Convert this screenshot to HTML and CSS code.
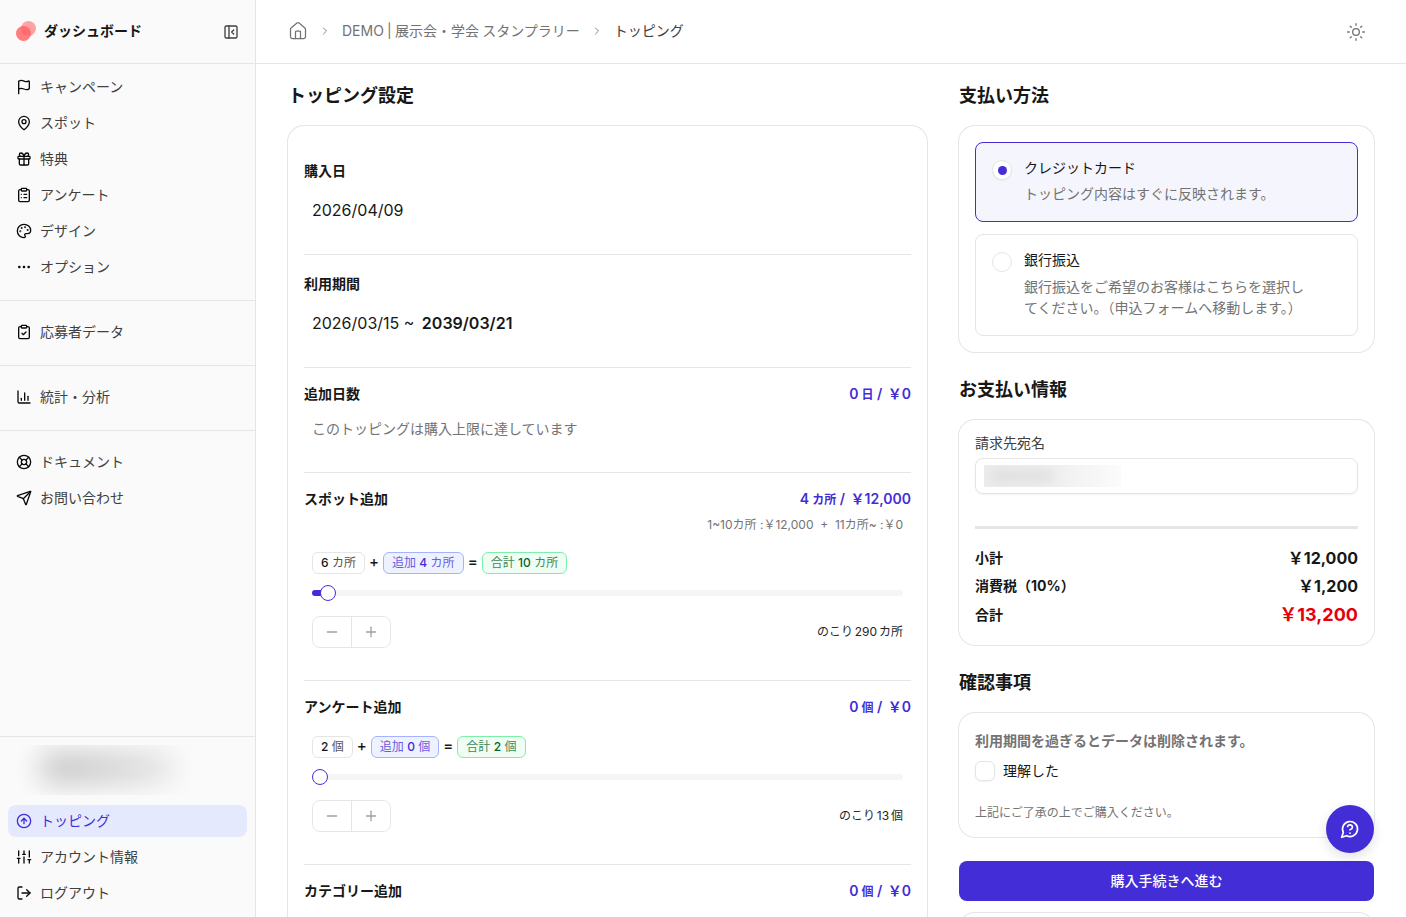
FILE: index.html
```html
<!DOCTYPE html>
<html lang="ja">
<head>
<meta charset="utf-8">
<title>トッピング</title>
<link rel="stylesheet" href="styles.css">
</head>
<body>
<div class="app">
  <aside class="sidebar">
    <div class="brand">
      <svg class="logo" viewBox="0 0 20 20" width="20" height="20"><circle cx="12.5" cy="7.5" r="7.5" fill="#ffa2a2"/><circle cx="7.5" cy="12.5" r="7.5" fill="#ff6467" opacity=".85"/></svg>
      <span class="brand-name">ダッシュボード</span>
      <svg class="ico collapse" viewBox="0 0 24 24"><rect x="3" y="3" width="18" height="18" rx="2"/><path d="M9 3v18"/><path d="m16 15-3-3 3-3"/></svg>
    </div>
    <nav class="group">
      <a class="item"><svg class="ico" viewBox="0 0 24 24"><path d="M4 22V4a1 1 0 0 1 .4-.8A6 6 0 0 1 8 2c3 0 5 2 7.333 2q2 0 3.067-.8A1 1 0 0 1 20 4v10a1 1 0 0 1-.4.8A6 6 0 0 1 16 16c-3 0-5-2-8-2a6 6 0 0 0-4 1.528"/></svg>キャンペーン</a>
      <a class="item"><svg class="ico" viewBox="0 0 24 24"><path d="M20 10c0 4.993-5.539 10.193-7.399 11.799a1 1 0 0 1-1.202 0C9.539 20.193 4 14.993 4 10a8 8 0 0 1 16 0"/><circle cx="12" cy="10" r="3"/></svg>スポット</a>
      <a class="item"><svg class="ico" viewBox="0 0 24 24"><rect x="3" y="8" width="18" height="4" rx="1"/><path d="M12 8v13"/><path d="M19 12v7a2 2 0 0 1-2 2H7a2 2 0 0 1-2-2v-7"/><path d="M7.5 8a2.5 2.5 0 0 1 0-5A4.8 8 0 0 1 12 8a4.8 8 0 0 1 4.5-5 2.5 2.5 0 0 1 0 5"/></svg>特典</a>
      <a class="item"><svg class="ico" viewBox="0 0 24 24"><rect x="8" y="2" width="8" height="4" rx="1"/><path d="M16 4h2a2 2 0 0 1 2 2v14a2 2 0 0 1-2 2H6a2 2 0 0 1-2-2V6a2 2 0 0 1 2-2h2"/><path d="M12 11h4"/><path d="M12 16h4"/><path d="M8 11h.01"/><path d="M8 16h.01"/></svg>アンケート</a>
      <a class="item"><svg class="ico" viewBox="0 0 24 24"><path d="M12 22a1 1 0 0 1 0-20 10 9 0 0 1 10 9 5 5 0 0 1-5 5h-2.25a1.75 1.75 0 0 0-1.4 2.8l.3.4a1.75 1.75 0 0 1-1.4 2.8z"/><circle cx="13.5" cy="6.5" r=".5"/><circle cx="17.5" cy="10.5" r=".5"/><circle cx="6.5" cy="12.5" r=".5"/><circle cx="8.5" cy="7.5" r=".5"/></svg>デザイン</a>
      <a class="item"><svg class="ico" viewBox="0 0 24 24"><circle cx="12" cy="12" r="1"/><circle cx="19" cy="12" r="1"/><circle cx="5" cy="12" r="1"/></svg>オプション</a>
    </nav>
    <nav class="group">
      <a class="item"><svg class="ico" viewBox="0 0 24 24"><rect x="8" y="2" width="8" height="4" rx="1"/><path d="M16 4h2a2 2 0 0 1 2 2v14a2 2 0 0 1-2 2H6a2 2 0 0 1-2-2V6a2 2 0 0 1 2-2h2"/><path d="m9 14 2 2 4-4"/></svg>応募者データ</a>
    </nav>
    <nav class="group">
      <a class="item"><svg class="ico" viewBox="0 0 24 24"><path d="M3 3v16a2 2 0 0 0 2 2h16"/><path d="M18 17v-6"/><path d="M13 17V6"/><path d="M8 17v-3"/></svg>統計・分析</a>
    </nav>
    <nav class="group group-last">
      <a class="item"><svg class="ico" viewBox="0 0 24 24"><circle cx="12" cy="12" r="10"/><path d="m4.93 4.93 4.24 4.24"/><path d="m14.83 9.17 4.24-4.24"/><path d="m14.83 14.83 4.24 4.24"/><path d="m9.17 14.83-4.24 4.24"/><circle cx="12" cy="12" r="4"/></svg>ドキュメント</a>
      <a class="item"><svg class="ico" viewBox="0 0 24 24"><path d="M14.536 21.686a.5.5 0 0 0 .937-.024l6.5-19a.496.496 0 0 0-.635-.635l-19 6.5a.5.5 0 0 0-.024.937l7.93 3.18a2 2 0 0 1 1.112 1.11z"/><path d="m21.854 2.147-10.94 10.939"/></svg>お問い合わせ</a>
    </nav>
    <div class="side-bottom">
      <div class="redact-side"><div class="redact-side-fill"></div></div>
      <a class="item active"><svg class="ico" viewBox="0 0 24 24"><circle cx="12" cy="12" r="10"/><path d="m16 12-4-4-4 4"/><path d="M12 16V8"/></svg>トッピング</a>
      <a class="item"><svg class="ico" viewBox="0 0 24 24"><path d="M4 21v-7"/><path d="M4 10V3"/><path d="M12 21v-9"/><path d="M12 8V3"/><path d="M20 21v-5"/><path d="M20 12V3"/><path d="M2 14h4"/><path d="M10 8h4"/><path d="M18 16h4"/></svg>アカウント情報</a>
      <a class="item"><svg class="ico" viewBox="0 0 24 24"><path d="m16 17 5-5-5-5"/><path d="M21 12H9"/><path d="M9 21H5a2 2 0 0 1-2-2V5a2 2 0 0 1 2-2h4"/></svg>ログアウト</a>
    </div>
  </aside>

  <div class="main">
    <header class="topbar">
      <svg class="ico home" viewBox="0 0 24 24"><path d="M15 21v-8a1 1 0 0 0-1-1h-4a1 1 0 0 0-1 1v8"/><path d="M3 10a2 2 0 0 1 .709-1.528l7-5.999a2 2 0 0 1 2.582 0l7 5.999A2 2 0 0 1 21 10v9a2 2 0 0 1-2 2H5a2 2 0 0 1-2-2z"/></svg>
      <svg class="ico chev" viewBox="0 0 24 24"><path d="m9 18 6-6-6-6"/></svg>
      <span class="crumb">DEMO | 展示会・学会 スタンプラリー</span>
      <svg class="ico chev" viewBox="0 0 24 24"><path d="m9 18 6-6-6-6"/></svg>
      <span class="crumb-now">トッピング</span>
      <svg class="ico sun" viewBox="0 0 24 24"><circle cx="12" cy="12" r="4"/><path d="M12 2v2"/><path d="M12 20v2"/><path d="m4.93 4.93 1.41 1.41"/><path d="m17.66 17.66 1.41 1.41"/><path d="M2 12h2"/><path d="M20 12h2"/><path d="m6.34 17.66-1.41 1.41"/><path d="m19.07 4.93-1.41 1.41"/></svg>
    </header>

    <main class="content">
      <section class="col">
        <h2 class="title">トッピング設定</h2>
        <div class="card">
          <div class="sec sec-plain">
            <div class="label">購入日</div>
            <div class="value">2026/04/09</div>
          </div>
          <div class="sec sec-plain sec-rule">
            <div class="label">利用期間</div>
            <div class="value">2026/03/15 ~ <strong class="value-end">2039/03/21</strong></div>
          </div>
          <div class="sec sec-rule">
            <div class="head"><span class="label">追加日数</span><span class="price"><span class="num">0</span><span class="unit">日</span> / <span class="yen">￥0</span></span></div>
            <p class="limit">このトッピングは購入上限に達しています</p>
          </div>
          <div class="sec sec-rule">
            <div class="head"><span class="label">スポット追加</span><span class="price"><span class="num">4</span><span class="unit">カ所</span> / <span class="yen">￥12,000</span></span></div>
            <p class="note">1~10カ所 :￥12,000 &nbsp;+&nbsp; 11カ所~ :￥0</p>
            <div class="chips chips-spot">
              <span class="chip"><b class="digit">6</b> カ所</span><span class="op">+</span>
              <span class="chip chip-blue">追加 <b class="digit">4</b> カ所</span><span class="op">=</span>
              <span class="chip chip-green">合計 <b class="digit">10</b> カ所</span>
            </div>
            <div class="slider"><div class="range"></div><div class="thumb thumb-spot"></div></div>
            <div class="controls">
              <div class="stepper">
                <button class="step"><svg class="ico" viewBox="0 0 24 24"><path d="M5 12h14"/></svg></button>
                <button class="step"><svg class="ico" viewBox="0 0 24 24"><path d="M5 12h14"/><path d="M12 5v14"/></svg></button>
              </div>
              <span class="left">のこり 290 カ所</span>
            </div>
          </div>
          <div class="sec sec-rule">
            <div class="head"><span class="label">アンケート追加</span><span class="price"><span class="num">0</span><span class="unit">個</span> / <span class="yen">￥0</span></span></div>
            <div class="chips chips-survey">
              <span class="chip"><b class="digit">2</b> 個</span><span class="op">+</span>
              <span class="chip chip-blue">追加 <b class="digit">0</b> 個</span><span class="op">=</span>
              <span class="chip chip-green">合計 <b class="digit">2</b> 個</span>
            </div>
            <div class="slider"><div class="thumb"></div></div>
            <div class="controls">
              <div class="stepper">
                <button class="step"><svg class="ico" viewBox="0 0 24 24"><path d="M5 12h14"/></svg></button>
                <button class="step"><svg class="ico" viewBox="0 0 24 24"><path d="M5 12h14"/><path d="M12 5v14"/></svg></button>
              </div>
              <span class="left">のこり 13 個</span>
            </div>
          </div>
          <div class="sec sec-rule">
            <div class="head"><span class="label">カテゴリー追加</span><span class="price"><span class="num">0</span><span class="unit">個</span> / <span class="yen">￥0</span></span></div>
          </div>
        </div>
      </section>

      <section class="col">
        <h2 class="title">支払い方法</h2>
        <div class="card card-pay">
          <label class="option option-on">
            <span class="radio radio-on"><span class="radio-dot"></span></span>
            <span class="opt-body"><span class="opt-title">クレジットカード</span><span class="opt-desc">トッピング内容はすぐに反映されます。</span></span>
          </label>
          <label class="option option-bank">
            <span class="radio"></span>
            <span class="opt-body"><span class="opt-title">銀行振込</span><span class="opt-desc">銀行振込をご希望のお客様はこちらを選択してください。（申込フォームへ移動します。）</span></span>
          </label>
        </div>

        <h2 class="title title-next">お支払い情報</h2>
        <div class="card card-bill">
          <div class="bill-label">請求先宛名</div>
          <div class="input"><div class="redact-input"><div class="redact-input-fill"></div></div></div>
          <div class="divider"></div>
          <div class="row row-first"><span>小計</span><span class="amount">￥12,000</span></div>
          <div class="row"><span>消費税（10%）</span><span class="amount">￥1,200</span></div>
          <div class="row row-total"><span>合計</span><span class="amount-total">￥13,200</span></div>
        </div>

        <h2 class="title title-next">確認事項</h2>
        <div class="card card-confirm">
          <div class="confirm-head">利用期間を過ぎるとデータは削除されます。</div>
          <label class="check"><span class="box"></span>理解した</label>
          <p class="fine">上記にご了承の上でご購入ください。</p>
        </div>
        <button class="buy">購入手続きへ進む</button>
        <div class="card card-stub"></div>
      </section>
    </main>
  </div>
  <button class="fab"><svg class="ico" viewBox="0 0 24 24"><path d="M7.9 20A9 9 0 1 0 4 16.1L2 22Z"/><path d="M9.09 9a3 3 0 0 1 5.83 1c0 2-3 3-3 3"/><path d="M12 17h.01"/></svg></button>
</div>
</body>
</html>
```

FILE: styles.css
```css
* { box-sizing: border-box; }
html, body { margin: 0; height: 100%; overflow: hidden; }
body {
  font-family: "Inter", "Noto Sans CJK JP", sans-serif;
  font-size: 14px;
  line-height: 20px;
  color: #0a0a0a;
  background: #fff;
}
.app { display: flex; height: 917px; overflow: hidden; position: relative; }
.ico { width: 16px; height: 16px; fill: none; stroke: currentColor; stroke-width: 2; stroke-linecap: round; stroke-linejoin: round; flex: none; }

/* sidebar */
.sidebar { width: 256px; flex: none; display: flex; flex-direction: column; background: #fafafa; border-right: 1px solid #e5e5e5; }
.brand { height: 64px; flex: none; display: flex; align-items: center; padding: 0 16px 1px 16px; border-bottom: 1px solid #e5e5e5; }
.logo { flex: none; }
.brand-name { font-weight: 700; margin-left: 8px; flex: 1; color: #171717; }
.collapse { color: #404040; margin-top: 1px; }
.group { padding: 7px 0 17px 8px; margin: 0; border-bottom: 1px solid #e5e5e5; display: flex; flex-direction: column; gap: 4px; }
.group + .group { padding-top: 15px; }
.group-last { border-bottom: 0; }
.item { display: flex; align-items: center; gap: 8px; height: 32px; padding: 0 8px; margin-right: 8px; border-radius: 8px; color: #404040; }
.item .ico { color: #0a0a0a; }
.side-bottom { margin-top: auto; border-top: 1px solid #e5e5e5; padding: 8px 0 8px 8px; display: flex; flex-direction: column; gap: 4px; }
.redact-side { width: 185px; height: 50px; margin: 0 0 6px 2px; overflow: hidden; background: #fbfbfb; }
.redact-side-fill { width: 135px; height: 26px; margin: 10px 0 0 30px; background: linear-gradient(90deg, #b4b4b4, #cccccc 60%, #e2e2e2); border-radius: 14px; filter: blur(15px); }
.item.active { background: #e5e9fe; color: #432dd7; }
.item.active .ico { color: #432dd7; }

/* top bar */
.main { flex: 1; min-width: 0; display: flex; flex-direction: column; }
.topbar { height: 64px; flex: none; display: flex; align-items: center; padding: 0 40px 1px 32px; border-bottom: 1px solid #e5e5e5; }
.home { width: 20px; height: 20px; stroke-width: 1.5; color: #737373; }
.chev { width: 12px; height: 12px; margin: 0 11px; color: #737373; stroke-width: 1.7; }
.crumb { color: #737373; word-spacing: -.7px; }
.crumb-now { color: #404040; }
.sun { width: 20px; height: 20px; margin: 1px 0 0 auto; color: #737373; stroke-width: 1.6; }

/* content */
.content { flex: 1; display: grid; grid-template-columns: 639px 415px; gap: 32px; padding: 18px 32px 0; overflow: hidden; align-items: start; }
.col { min-width: 0; }
.title { margin: 0 0 16px; font-size: 18px; line-height: 28px; font-weight: 700; color: #171717; }
.title-next { margin-top: 24px; }
.card { background: #fff; border-radius: 16px; box-shadow: 0 0 0 1px #e5e5e5; padding: 16px; }

.sec { padding: 16px 0 32px; }
.sec-plain { padding-top: 19px; }
.sec-rule { border-top: 1px solid #e5e5e5; }
.label { font-weight: 700; color: #171717; display: block; }
.value { margin: 17px 8px 0; font-size: 16px; line-height: 24px; color: #171717; }
.value-end { font-weight: 600; margin-left: 3px; }
.head { display: flex; justify-content: space-between; align-items: center; height: 20px; }
.price { color: #432dd7; font-weight: 600; }
.unit { font-size: 12px; margin-left: 3px; }
.yen { margin-left: 2px; }
.limit { margin: 15px 8px 1px; color: #737373; line-height: 20px; }
.note { margin: 6px 8px 0; text-align: right; font-size: 12px; line-height: 20px; color: #737373; }
.chips { margin: 0 8px; display: flex; align-items: center; gap: 4px; }
.chips-spot { margin-top: 17px; }
.chips-survey { margin-top: 19px; }
.chip { height: 22px; display: inline-flex; align-items: center; padding: 0 8px; border: 1px solid #e5e5e5; border-radius: 6px; font-size: 12px; color: #525252; white-space: pre; }
.digit { font-weight: 500; color: #171717; }
.chip-blue { background: #eef2ff; border-color: #a3b3ff; color: #6a5be2; }
.chip-blue .digit { color: #432dd7; }
.chip-green { background: #f0fdf4; border-color: #7bf1a8; color: #3c8a5c; }
.chip-green .digit { color: #016630; }
.op { font-size: 15px; font-weight: 500; color: #171717; margin-bottom: 2px; }
.slider { position: relative; height: 6px; margin: 16px 8px 0; background: #f5f5f5; border-radius: 3px; }
.range { position: absolute; left: 0; top: 0; bottom: 0; width: 16px; background: #432dd7; border-radius: 3px; }
.thumb { position: absolute; left: 0; top: -5px; width: 16px; height: 16px; background: #fff; border: 1px solid #432dd7; border-radius: 50%; }
.thumb-spot { left: 8px; }
.controls { margin: 20px 8px 0; display: flex; align-items: center; justify-content: space-between; }
.stepper { display: flex; border: 1px solid #e5e5e5; border-radius: 8px; overflow: hidden; height: 32px; }
.step { width: 38px; padding: 0; display: flex; align-items: center; justify-content: center; background: #fff; border: 0; color: #a1a1a1; font: inherit; }
.step + .step { border-left: 1px solid #e5e5e5; width: 39px; }
.left { font-size: 12px; color: #262626; word-spacing: -1.5px; }

/* payment */
.card-pay { display: flex; flex-direction: column; gap: 12px; }
.option { display: flex; gap: 12px; padding: 15px 16px 16px; border: 1px solid #e5e5e5; border-radius: 8px; background: #fff; }
.option-on { border-color: #432dd7; background: #f5f6fd; padding-bottom: 17px; }
.option-bank { padding-bottom: 17px; }
.radio { width: 20px; height: 20px; flex: none; margin-top: 2px; border: 1px solid #e5e5e5; border-radius: 50%; background: #fff; display: flex; align-items: center; justify-content: center; }
.radio-on { box-shadow: 0 1px 2px rgba(0,0,0,.05); }
.radio-dot { width: 9px; height: 9px; border-radius: 50%; background: #432dd7; }
.opt-body { display: flex; flex-direction: column; width: 288px; }
.opt-title { color: #171717; }
.opt-desc { margin-top: 6px; line-height: 21px; color: #737373; }
.option-on .opt-desc { margin-top: 5px; }

/* billing */
.card-bill { padding-top: 13px; }
.bill-label { color: #404040; }
.input { height: 36px; margin-top: 5px; border: 1px solid #e5e5e5; border-radius: 8px; box-shadow: 0 1px 2px rgba(0,0,0,.05); padding: 6px 8px; background: #fff; }
.redact-input { width: 137px; height: 22px; overflow: hidden; background: linear-gradient(90deg, #ececec 0%, #efefef 50%, #fbfbfb 100%); }
.redact-input-fill { width: 60px; height: 10px; margin: 6px 0 0 8px; background: #dcdcdc; filter: blur(6px); }
.divider { height: 3px; margin-top: 32px; background: #e5e5e5; }
.row { display: flex; justify-content: space-between; align-items: center; height: 24px; margin-top: 4px; font-weight: 700; color: #171717; }
.row-first { margin-top: 17px; }
.row-total { height: 28px; margin-top: 3px; }
.amount { font-size: 16px; font-weight: 700; }
.amount-total { font-size: 18px; font-weight: 700; color: #e7000b; }

/* confirm */
.card-confirm { padding: 18px 16px 16px; }
.confirm-head { font-weight: 700; color: #737373; }
.check { display: flex; align-items: center; gap: 8px; margin-top: 10px; color: #171717; }
.box { width: 20px; height: 20px; border: 1px solid #e5e5e5; border-radius: 6px; box-shadow: 0 1px 2px rgba(0,0,0,.05); background: #fff; }
.fine { margin: 24px 0 0; font-size: 12px; line-height: 16px; color: #737373; }
.buy { display: block; width: 100%; height: 40px; margin-top: 24px; border: 0; border-radius: 8px; background: #432dd7; color: #fff; font: inherit; font-weight: 500; }
.card-stub { margin-top: 12px; height: 80px; }

.fab { position: absolute; right: 32px; bottom: 64px; width: 48px; height: 48px; padding: 0; border: 0; border-radius: 50%; background: #432dd7; color: #fff; display: flex; align-items: center; justify-content: center; box-shadow: 0 4px 12px rgba(0,0,0,.12); }
.fab .ico { width: 20px; height: 20px; }
```
